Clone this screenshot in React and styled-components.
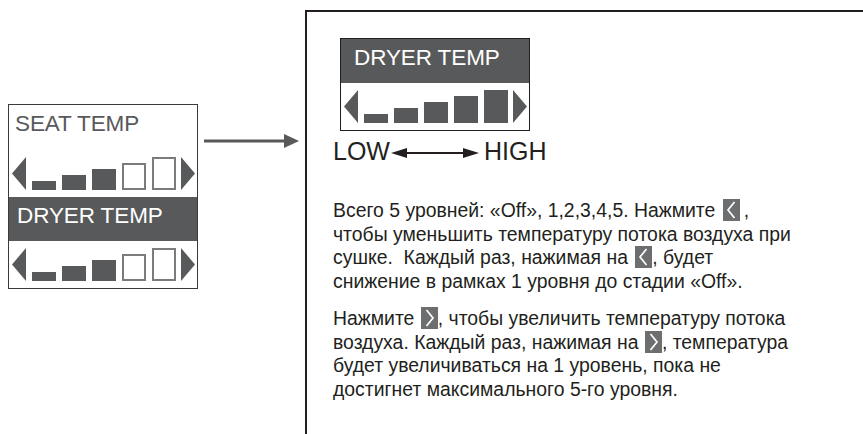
import React from 'react'
import styled, { createGlobalStyle } from 'styled-components';

const Global = createGlobalStyle`
  html, body { margin: 0; padding: 0; background: #fff; }
  body { font-family: "Liberation Sans", Arial, sans-serif; color: #231f20; }
`

const Page = styled.div`
  display: flex;
  align-items: flex-start;
  padding-left: 8px;
  height: 434px;
  overflow: hidden;
`

const Display = styled.div`
  width: 190px;
  box-sizing: border-box;
  border: 1px solid ${p => p.$dark ? '#1f1f1f' : '#3a3a3a'};
  background: #fff;
  margin-top: ${p => p.$top || 0}px;
  margin-left: ${p => p.$left || 0}px;
`

const Header = styled.div`
  height: ${p => p.$h || 44}px;
  box-sizing: border-box;
  padding: ${p => p.$pt || 7}px 0 0 ${p => p.$pl || 7}px;
  font-size: 22.5px;
  letter-spacing: -0.1px;
  background: ${p => p.$active ? '#58595b' : '#fff'};
  color: ${p => p.$active ? '#fff' : '#58595b'};
  white-space: nowrap;
`

const Row = styled.div`
  height: 47px;
  box-sizing: border-box;
  padding: 0 2px 7px 3px;
  display: flex;
  align-items: flex-end;
  justify-content: space-between;
`

const Bars = styled.div`
  display: flex;
  align-items: flex-end;
  gap: 6px;
`

const Bar = styled.div`
  width: 24px;
  height: ${p => p.$h}px;
  box-sizing: border-box;
  background: ${p => p.$on ? '#58595b' : '#fff'};
  border: ${p => p.$on ? 'none' : '2px solid #7a7b7d'};
`

const Tri = ({ dir }) => (
  <svg width="14" height="33" viewBox="0 0 14 33">
    <polygon points={dir === 'left' ? '14,0 14,33 0,16.5' : '0,0 0,33 14,16.5'} fill="#58595b" />
  </svg>
)

const LevelRow = ({ on }) => (
  <Row>
    <Tri dir="left" />
    <Bars>
      {[9, 15, 21, 27, 33].map((h, i) => (
        <Bar key={i} $h={h} $on={i < on} />
      ))}
    </Bars>
    <Tri dir="right" />
  </Row>
)

const Pointer = styled.svg`
  margin-top: 133px;
  margin-left: 6px;
  flex: none;
`

const Frame = styled.div`
  flex: 1;
  margin-top: 10px;
  margin-left: 6px;
  height: 440px;
  border-top: 2px solid #231f20;
  border-left: 2px solid #231f20;
  padding: 26px 0 0 26px;
`

const Scale = styled.div`
  display: flex;
  align-items: center;
  margin-top: 6px;
  font-size: 25px;
  color: #231f20;
`

const ScaleArrow = styled.svg`
  margin: 3px 5px 0 1px;
`

const Text = styled.div`
  margin-top: 33px;
  font-size: 19.4px;
  line-height: 23.5px;
  color: #231f20;
  white-space: nowrap;
`

const Para = styled.p`
  margin: 0 0 14px;
`

const Key = styled.span`
  display: inline-block;
  width: 17px;
  height: 22px;
  background: #6d6e70;
  vertical-align: -4px;
  margin: 0 ${p => p.$mr || 0}px 0 ${p => p.$ml || 4}px;
  svg { display: block; }
`

const KeyIcon = ({ dir, ml, mr }) => (
  <Key $ml={ml} $mr={mr}>
    <svg width="17" height="22" viewBox="0 0 17 22">
      <polyline
        points={dir === 'left' ? '11.5,3 5,11 11.5,19' : '5.5,3 12,11 5.5,19'}
        fill="none" stroke="#fff" strokeWidth="1.7" />
    </svg>
  </Key>
)

export default function App() {
  return (
    <Page>
      <Global />
      <Display $top={104}>
        <Header $h={45} $pt={6} $pl={6}>SEAT TEMP</Header>
        <LevelRow on={3} />
        <Header $active $pt={6} $pl={8}>DRYER TEMP</Header>
        <LevelRow on={3} />
      </Display>
      <Pointer width="95" height="16" viewBox="0 0 95 16">
        <rect x="0" y="6.5" width="82" height="3" fill="#58595b" />
        <polygon points="80,1 95,8 80,15" fill="#58595b" />
      </Pointer>
      <Frame>
        <Display $dark $left={7}>
          <Header $active $pt={6} $pl={13}>DRYER TEMP</Header>
          <LevelRow on={5} />
        </Display>
        <Scale>
          LOW
          <ScaleArrow width="88" height="12" viewBox="0 0 88 12">
            <rect x="12" y="5" width="64" height="2" fill="#231f20" />
            <polygon points="0,6 16,1 16,11" fill="#231f20" />
            <polygon points="88,6 72,1 72,11" fill="#231f20" />
          </ScaleArrow>
          HIGH
        </Scale>
        <Text>
          <Para>
            Всего 5 уровней: «Off», 1,2,3,4,5. Нажмите <KeyIcon dir="left" ml={2} mr={4} />,<br />
            чтобы уменьшить температуру потока воздуха при<br />
            сушке.&nbsp; Каждый раз, нажимая на <KeyIcon dir="left" ml={2} />, будет<br />
            снижение в рамках 1 уровня до стадии «Off».
          </Para>
          <Para>
            Нажмите <KeyIcon dir="right" ml={1} />, чтобы увеличить температуру потока<br />
            воздуха. Каждый раз, нажимая на <KeyIcon dir="right" ml={1} />, температура<br />
            будет увеличиваться на 1 уровень, пока не<br />
            достигнет максимального 5-го уровня.
          </Para>
        </Text>
      </Frame>
    </Page>
  )
}
